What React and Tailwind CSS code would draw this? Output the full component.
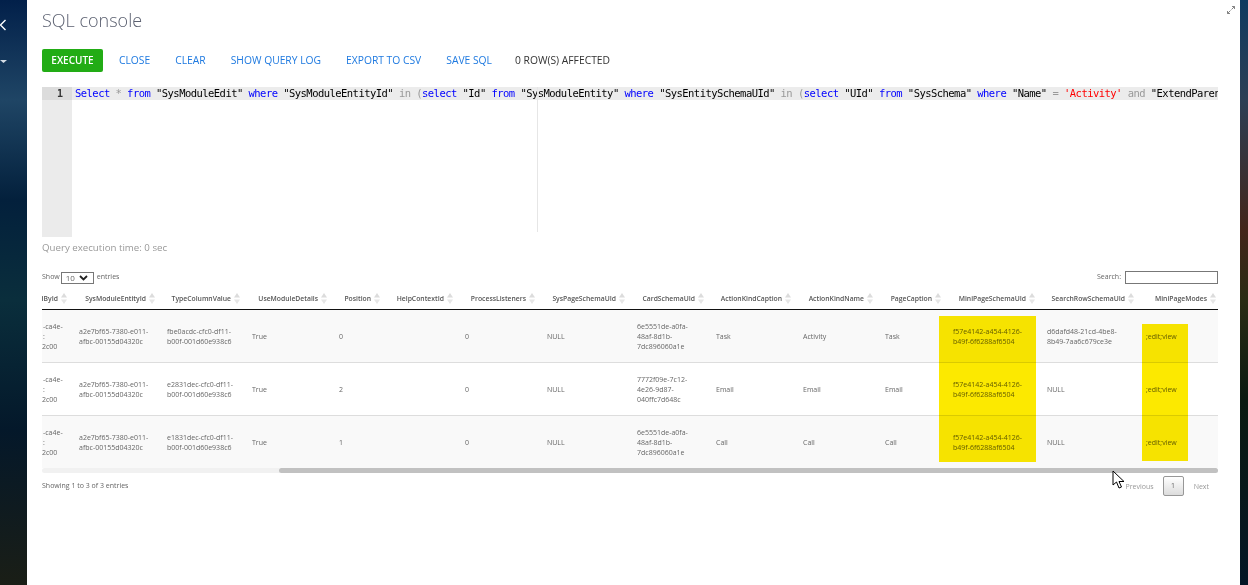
const columns = [
  { name: 'dById', width: 'w-[27px]' },
  { name: 'SysModuleEntityId', width: 'w-[88px]' },
  { name: 'TypeColumnValue', width: 'w-[85px]' },
  { name: 'UseModuleDetails', width: 'w-[87px]' },
  { name: 'Position', width: 'w-[53px]' },
  { name: 'HelpContextId', width: 'w-[73px]' },
  { name: 'ProcessListeners', width: 'w-[82px]' },
  { name: 'SysPageSchemaUId', width: 'w-[90px]' },
  { name: 'CardSchemaUId', width: 'w-[79px]' },
  { name: 'ActionKindCaption', width: 'w-[87px]' },
  { name: 'ActionKindName', width: 'w-[82px]' },
  { name: 'PageCaption', width: 'w-[68px]' },
  { name: 'MiniPageSchemaUId', width: 'w-[94px]' },
  { name: 'SearchRowSchemaUId', width: 'w-[99px]' },
  { name: 'MiniPageModes', width: 'w-[82px]' },
];

const miniPage = 'f57e4142-a454-4126-b49f-6f6288af6504';

const rows = [
  {
    height: 'h-[53px]',
    bg: 'bg-[#f9f9f9]',
    cells: ['a2e7bf65-7380-e011-afbc-00155d04320c', 'fbe0acdc-cfc0-df11-b00f-001d60e938c6', 'True', '0', '', '0', 'NULL', '6e5551de-a0fa-48af-8d1b-7dc896060a1e', 'Task', 'Activity', 'Task', miniPage, 'd6dafd48-21cd-4be8-8b49-7aa6c679ce3e', ';edit;view'],
  },
  {
    height: 'h-[53px]',
    bg: 'bg-white',
    cells: ['a2e7bf65-7380-e011-afbc-00155d04320c', 'e2831dec-cfc0-df11-b00f-001d60e938c6', 'True', '2', '', '0', 'NULL', '7772f09e-7c12-4e26-9d87-040ffc7d648c', 'Email', 'Email', 'Email', miniPage, 'NULL', ';edit;view'],
  },
  {
    height: 'h-[52px]',
    bg: 'bg-[#f9f9f9]',
    cells: ['a2e7bf65-7380-e011-afbc-00155d04320c', 'e1831dec-cfc0-df11-b00f-001d60e938c6', 'True', '1', '', '0', 'NULL', '6e5551de-a0fa-48af-8d1b-7dc896060a1e', 'Call', 'Call', 'Call', miniPage, 'NULL', ';edit;view'],
  },
];

const SortIcon = () => (
  <svg width="6" height="11" viewBox="0 0 6 11" className="shrink-0">
    <path d="M3 0 L6 4.5 H0 Z" fill="#dcdcdc" />
    <path d="M3 11 L6 6.5 H0 Z" fill="#e6e6e6" />
  </svg>
);

const Kw = ({ children }) => <span className="text-[#0000ff]">{children}</span>;
const Op = ({ children }) => <span className="text-[#999999]">{children}</span>;

const App = () => {
  return (
    <div className="flex h-[585px] w-[1248px] overflow-hidden font-['Open_Sans',sans-serif]">
      <aside className="w-[27px] shrink-0 bg-[linear-gradient(180deg,#02204a_0px,#1f4565_100px,#03203c_200px,#0a2e3c_300px,#04182a_430px,#1a1e16_585px)] pt-[19px]">
        <svg width="6" height="12" viewBox="0 0 6 12" className="block">
          <path d="M5.5 1 L0.5 6 L5.5 11" fill="none" stroke="#ffffff" strokeWidth="1.4" />
        </svg>
        <svg width="7" height="3" viewBox="0 0 7 3" className="mt-[29px] block">
          <path d="M0 0 H7 L3.5 3 Z" fill="#d5dde5" />
        </svg>
      </aside>

      <main className="relative mt-px min-w-0 flex-1 rounded-t-[6px] bg-white pl-[15px] pr-[22px]">
        <svg width="8" height="8" viewBox="0 0 8 8" className="absolute right-[5px] top-[5px]">
          <path d="M4.5 3.5 L7.5 0.5 M5 0.5 H7.5 V3 M3.5 4.5 L0.5 7.5 M0.5 5 V7.5 H3" fill="none" stroke="#777777" strokeWidth="0.9" />
        </svg>

        <div className="h-[48px] pt-[6px] text-[18px] font-light leading-[26px] text-[#5b6070]">SQL console</div>

        <div className="flex h-[23px] items-center text-[10.3px] text-[#1f7ae0]">
          <button className="h-full w-[61px] rounded-[2px] bg-[#22ac15] text-[10px] font-semibold text-white">EXECUTE</button>
          <span className="ml-[16px]">CLOSE</span>
          <span className="ml-[25px]">CLEAR</span>
          <span className="ml-[25px]">SHOW QUERY LOG</span>
          <span className="ml-[25px]">EXPORT TO CSV</span>
          <span className="ml-[25px]">SAVE SQL</span>
          <span className="ml-[23px] text-[#333333]">0 ROW(S) AFFECTED</span>
        </div>

        <div className="mt-[15px] flex h-[150px]">
          <div className="w-[30px] shrink-0 bg-[#ebebeb]">
            <div className="h-[13px] bg-[#dcdcdc] pr-[9px] text-right font-['DejaVu_Sans_Mono',monospace] text-[10px] font-bold leading-[13px] text-[#333333]">1</div>
          </div>
          <div className="relative min-w-0 flex-1 overflow-hidden">
            <div className="h-[13px] overflow-hidden whitespace-pre bg-[#ececec] pl-[3px] font-['DejaVu_Sans_Mono',monospace] text-[10.5px] leading-[13px] tracking-[-0.54px] text-black">
              <Kw>Select</Kw> <Op>*</Op> <Kw>from</Kw> "SysModuleEdit" <Kw>where</Kw> "SysModuleEntityId" <Op>in</Op> <Op>(</Op><Kw>select</Kw> "Id" <Kw>from</Kw> "SysModuleEntity" <Kw>where</Kw> "SysEntitySchemaUId" <Op>in</Op> <Op>(</Op><Kw>select</Kw> "UId" <Kw>from</Kw> "SysSchema" <Kw>where</Kw> "Name" <Op>=</Op> <span className="text-[#ff0000]">'Activity'</span> <Op>and</Op> "ExtendParent"
            </div>
            <div className="absolute bottom-[5px] left-[465px] top-0 w-px bg-[#e6e6e6]" />
          </div>
        </div>

        <div className="flex h-[20px] items-center pt-[2px] text-[9.7px] text-[#999999]">Query execution time: 0 sec</div>

        <div className="mt-[14px] flex h-[13px] items-center justify-between text-[7px] text-[#666666]">
          <div className="flex items-center">
            <span>Show</span>
            <span className="ml-px flex h-[12px] w-[33px] items-center justify-between border border-[#777777] pl-[4px] pr-[5px] text-[8px]">
              10
              <svg width="9" height="6" viewBox="0 0 9 6">
                <path d="M1 1 L4.5 4.5 L8 1" fill="none" stroke="#222222" strokeWidth="1.8" />
              </svg>
            </span>
            <span className="ml-[3px]">entries</span>
          </div>
          <div className="flex items-center">
            <span>Search:</span>
            <span className="ml-[4px] h-[13px] w-[93px] border border-[#777777]" />
          </div>
        </div>

        <div className="relative mt-[6px]">
          <table className="w-full table-fixed border-separate border-spacing-0 text-[7px] leading-[10px] text-[#666666]">
            <thead>
              <tr>
                {columns.map((col) => (
                  <th key={col.name} className={`${col.width} h-[20px] overflow-hidden border-b border-[#111111] p-0 pb-[2px] pr-[2px] text-[6.8px] font-semibold text-[#555555]`}>
                    <div className="flex items-center justify-end gap-[3px] whitespace-nowrap">
                      {col.name}
                      <SortIcon />
                    </div>
                  </th>
                ))}
              </tr>
            </thead>
            <tbody>
              {rows.map((row, i) => (
                <tr key={i} className={`${row.height} ${row.bg}`}>
                  <td className={`overflow-hidden p-0 pt-[2px] ${i < 2 ? 'border-b border-[#dddddd]' : ''}`}>
                    <div className="whitespace-nowrap pl-px">-ca4e-</div>
                    <div className="whitespace-nowrap pl-px">:</div>
                    <div className="whitespace-nowrap">2c00</div>
                  </td>
                  {row.cells.map((cell, j) => (
                    <td key={j} className={`pb-0 pl-[10px] pr-[6px] pt-[2px] ${i < 2 ? 'border-b border-[#dddddd]' : ''}`}>{cell}</td>
                  ))}
                </tr>
              ))}
            </tbody>
          </table>
          <div className="absolute left-[897px] top-[26px] h-[146px] w-[97px] bg-[#fce900] mix-blend-multiply" />
          <div className="absolute left-[1100px] top-[34px] h-[137px] w-[46px] bg-[#fce900] mix-blend-multiply" />
        </div>

        <div className="h-[5px] rounded-full bg-[#f1f1f1] pl-[237px]">
          <div className="h-full rounded-full bg-[#c1c1c1]" />
        </div>

        <div className="mt-[3px] flex h-[20px] items-center justify-between text-[7px] text-[#666666]">
          <span className="mt-px">Showing 1 to 3 of 3 entries</span>
          <div className="flex items-center pr-[9px]">
            <span className="mt-[2px] text-[#999999]">Previous</span>
            <span className="ml-[9px] flex h-[20px] w-[21px] items-center justify-center rounded-[2px] border border-[#979797] bg-[linear-gradient(180deg,#ffffff,#dcdcdc)]">1</span>
            <span className="ml-[10px] mt-[2px] text-[#999999]">Next</span>
          </div>
        </div>

        <svg width="14" height="20" viewBox="0 0 14 20" className="absolute left-[1085px] top-[469px]">
          <path d="M1 1 V15 L4.5 12 L7 18 L9.5 17 L7 11.5 H12 Z" fill="#ffffff" stroke="#000000" strokeWidth="1" />
        </svg>
      </main>

      <aside className="w-[8px] shrink-0 bg-[linear-gradient(180deg,#0f3a60_0px,#2c3f55_100px,#43251a_230px,#2a2c14_300px,#0a1a10_400px,#041626_585px)]" />
    </div>
  );
};

export default App;
